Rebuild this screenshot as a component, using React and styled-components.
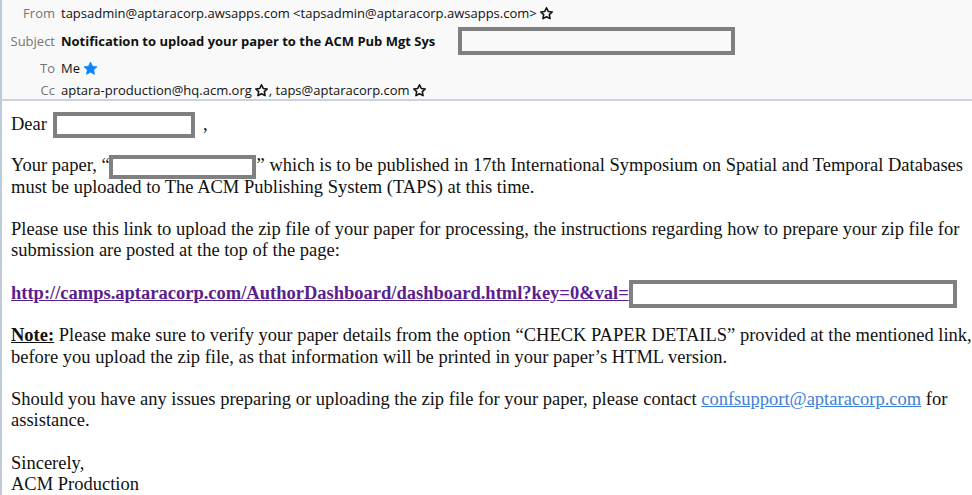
import React from 'react';
import styled, { createGlobalStyle } from 'styled-components';

const GlobalStyle = createGlobalStyle`
    html, body {
        margin: 0;
        padding: 0;
        background: #ffffff;
    }
`;

function Star({ filled }) {
    return (
        <StarIcon viewBox="0 0 24 24" $filled={filled}>
            <path d="M12 2.8l2.8 5.9 6.4.8-4.7 4.4 1.2 6.4L12 17.2l-5.7 3.1 1.2-6.4-4.7-4.4 6.4-.8z" />
        </StarIcon>
    );
}

function App() {
    return (
        <Page>
            <GlobalStyle />
            <Header>
                <Row>
                    <Label>From</Label>
                    <Value>
                        tapsadmin@aptaracorp.awsapps.com &lt;tapsadmin@aptaracorp.awsapps.com&gt;
                        <Star />
                    </Value>
                </Row>
                <Row $tall>
                    <Label>Subject</Label>
                    <Value $bold>
                        Notification to upload your paper to the ACM Pub Mgt Sys
                        <Redacted $w={277} $h={28} $ml={23} $bg="#f9f9f9" />
                    </Value>
                </Row>
                <Row>
                    <Label>To</Label>
                    <Value>
                        Me<Star filled />
                    </Value>
                </Row>
                <Row>
                    <Label>Cc</Label>
                    <Value>
                        aptara-production@hq.acm.org<Star />, taps@aptaracorp.com<Star />
                    </Value>
                </Row>
            </Header>
            <Body>
                <Para $gap={20.7}>
                    Dear<Redacted $w={142} $h={26} $ml={6} $mr={8} />,
                </Para>
                <Para>
                    Your paper, “<Redacted $w={147} $h={24} $ml={-1} $mr={1} />” which is to be published in 17th International Symposium on Spatial and Temporal Databases
                    must be uploaded to The ACM Publishing System (TAPS) at this time.
                </Para>
                <Para>
                    Please use this link to upload the zip file of your paper for processing, the instructions regarding how to prepare your zip file for
                    submission are posted at the top of the page:
                </Para>
                <Para>
                    <PaperLink href="#">http://camps.aptaracorp.com/AuthorDashboard/dashboard.html?key=0&amp;val=</PaperLink>
                    <Redacted $w={328} $h={28} />
                </Para>
                <Para>
                    <NoteTag>Note:</NoteTag> Please make sure to verify your paper details from the option “CHECK PAPER DETAILS” provided at the mentioned link,
                    before you upload the zip file, as that information will be printed in your paper’s HTML version.
                </Para>
                <Para>
                    Should you have any issues preparing or uploading the zip file for your paper, please contact <MailLink href="#">confsupport@aptaracorp.com</MailLink> for
                    assistance.
                </Para>
                <Para>
                    Sincerely,<br />
                    ACM Production
                </Para>
            </Body>
        </Page>
    );
}

const Page = styled.div`
    width: 972px;
    height: 495px;
    overflow: hidden;
    box-sizing: border-box;
    border-left: 2px solid #bfcad8;
    background: #ffffff;
`;

const Header = styled.div`
    background: #f9f9f9;
    border-bottom: 2px solid #c9d2de;
    padding: 2px 0 0;
    height: 101px;
    box-sizing: border-box;
`;

const Row = styled.div`
    display: grid;
    grid-template-columns: 53px 1fr;
    column-gap: 6px;
    align-items: center;
    height: ${p => (p.$tall ? '33px' : '22px')};
    font-family: "Open Sans", "Noto Sans", sans-serif;
    font-size: 13px;
`;

const Label = styled.div`
    text-align: right;
    color: #747474;
`;

const Value = styled.div`
    display: flex;
    align-items: center;
    white-space: nowrap;
    color: #111111;
    font-weight: ${p => (p.$bold ? 700 : 400)};
`;

const StarIcon = styled.svg`
    width: ${p => (p.$filled ? 17 : 15)}px;
    height: ${p => (p.$filled ? 17 : 15)}px;
    margin-left: 2px;
    flex: none;
    path {
        fill: ${p => (p.$filled ? '#0a84ff' : 'none')};
        stroke: ${p => (p.$filled ? '#0a84ff' : '#111111')};
        stroke-width: ${p => (p.$filled ? 1 : 2.5)};
        stroke-linejoin: round;
    }
`;

const Redacted = styled.span`
    display: inline-block;
    box-sizing: border-box;
    width: ${p => p.$w}px;
    height: ${p => p.$h}px;
    margin: -4px ${p => p.$mr || 0}px -4px ${p => p.$ml || 0}px;
    border: 4px solid #808080;
    background: ${p => p.$bg || '#ffffff'};
    vertical-align: middle;
`;

const Body = styled.div`
    padding: 12.5px 0 0 9px;
    font-family: "Liberation Serif", "Times New Roman", serif;
    font-size: 18.5px;
    line-height: 21.25px;
    color: #111111;
`;

const Para = styled.p`
    margin: 0 0 ${p => (p.$gap != null ? p.$gap : 21.1)}px;
`;

const PaperLink = styled.a`
    color: #5a1f8f;
    font-weight: 700;
    text-decoration: underline;
`;

const NoteTag = styled.span`
    font-weight: 700;
    text-decoration: underline;
`;

const MailLink = styled.a`
    color: #3c7fdc;
    text-decoration: underline;
`;

export default App;
